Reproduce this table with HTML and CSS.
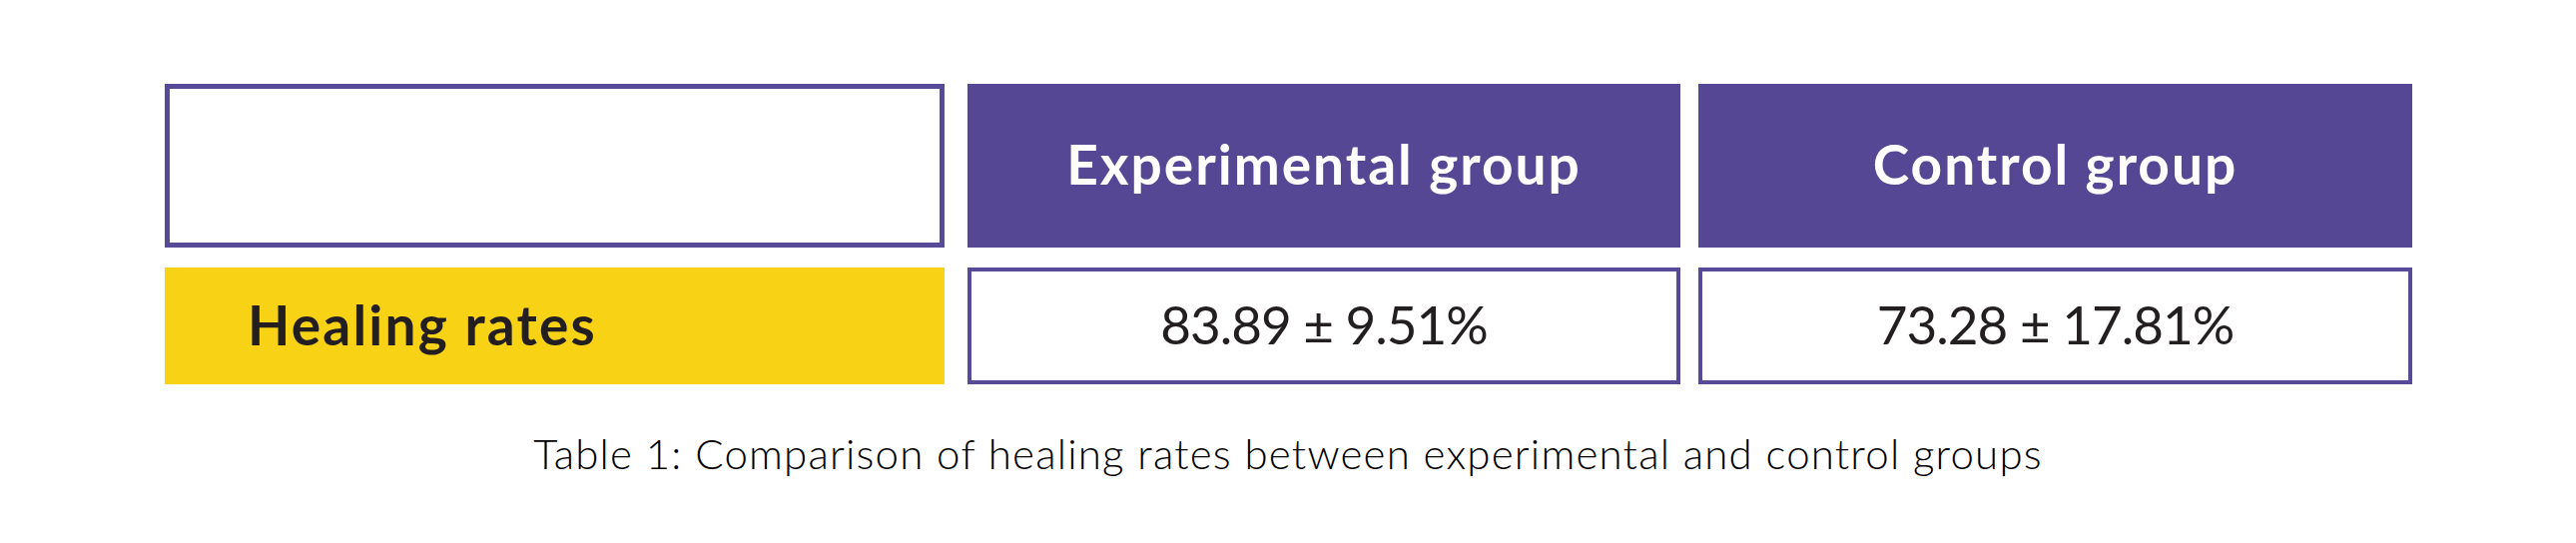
FILE: index.html
```html
<!DOCTYPE html>
<html>
<head>
<meta charset="utf-8">
<link rel="stylesheet" href="styles.css">
</head>
<body>
<div class="page">
  <div class="table">
    <div class="cell empty col-a"></div>
    <div class="cell head col-b">Experimental group</div>
    <div class="cell head col-c">Control group</div>
    <div class="cell label col-a">Healing rates</div>
    <div class="cell value col-b">83.89 ± 9.51%</div>
    <div class="cell value col-c">73.28 ± 17.81%</div>
  </div>
  <p class="caption">Table 1: Comparison of healing rates between experimental and control groups</p>
</div>
</body>
</html>
```

FILE: styles.css
```css
html, body {
  margin: 0;
  padding: 0;
  background: #ffffff;
}
.page {
  width: 2580px;
  height: 544px;
  padding-top: 84px;
  box-sizing: border-box;
  font-family: "Lato", "Open Sans", sans-serif;
}
.table {
  margin-left: 165px;
  display: grid;
  grid-template-columns: 781px 23px 714px 18px 715px;
  grid-template-rows: 164px 117px;
  row-gap: 20px;
}
.col-a { grid-column: 1; }
.col-b { grid-column: 3; }
.col-c { grid-column: 5; }
.cell {
  box-sizing: border-box;
  display: flex;
  align-items: center;
  justify-content: center;
}
.empty {
  border: 5px solid #574a97;
  background: #ffffff;
}
.head {
  background: #564795;
  color: #ffffff;
  font-weight: 700;
  font-size: 55px;
  letter-spacing: 2px;
  padding-bottom: 4px;
}
.label {
  background: #f7d215;
  color: #231f20;
  font-weight: 700;
  font-size: 55px;
  letter-spacing: 2.2px;
  justify-content: flex-start;
  padding-left: 83px;
  padding-bottom: 4px;
}
.value {
  border: 4px solid #574a97;
  color: #231f20;
  font-weight: 400;
  font-size: 53px;
  letter-spacing: -1px;
  padding-bottom: 4px;
}
.caption {
  margin: 44px 0 0 0;
  text-align: center;
  font-weight: 300;
  font-size: 42px;
  letter-spacing: 1.2px;
  color: #000000;
}
```
